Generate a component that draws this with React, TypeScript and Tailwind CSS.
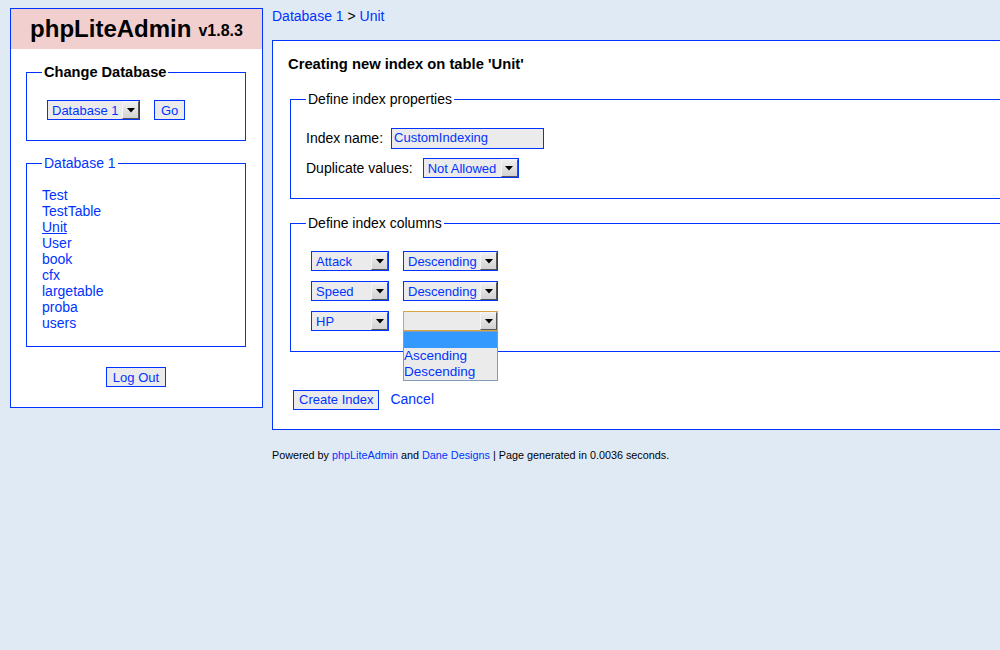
import React from "react";

const font = { fontFamily: '"Liberation Sans", Arial, sans-serif' };

function Arrow() {
  return (
    <span className="flex h-[18px] w-[17px] shrink-0 items-center justify-center border border-t-[#f4f4f4] border-l-[#f4f4f4] border-r-[#555] border-b-[#555] bg-gradient-to-b from-[#f0f0f0] to-[#d2d2d2]">
      <svg width="8" height="5" viewBox="0 0 8 5">
        <path d="M0 0H8L4 4.5Z" fill="#000" />
      </svg>
    </span>
  );
}

function Select({ value, width, focused }: { value: string; width: string; focused?: boolean }) {
  return (
    <div
      className={`inline-flex h-[20px] items-center justify-between overflow-hidden whitespace-nowrap border bg-[#ebebeb] pl-[4px] text-[13px] leading-none text-[#03f] ${width} ${
        focused ? "border-[#d9a441]" : "border-[#03f]"
      }`}
    >
      <span>{value}</span>
      <Arrow />
    </div>
  );
}

function Button({ label, pad = "px-[6px]" }: { label: string; pad?: string }) {
  return (
    <span className={`inline-flex h-[20px] items-center whitespace-nowrap border border-[#03f] bg-[#ebebeb] text-[13px] leading-none text-[#03f] ${pad}`}>
      {label}
    </span>
  );
}

const tables = ["Test", "TestTable", "Unit", "User", "book", "cfx", "largetable", "proba", "users"];

export default function App() {
  return (
    <div className="h-[650px] w-[1000px] overflow-hidden bg-[#e0eaf5]" style={font}>
      <div className="flex items-start">
        {/* sidebar */}
        <div className="ml-[10px] mt-[8px] w-[253px] shrink-0 border border-[#03f] bg-white pb-[20px]">
          <div className="flex h-[40px] items-center justify-center bg-[#f2cfcf] text-black">
            <span className="text-[24px] font-bold">phpLiteAdmin</span>
            <span className="ml-[7px] mt-[4px] text-[16px] font-bold">v1.8.3</span>
          </div>
          <div className="pl-[15px] pr-[16px]">
            <fieldset className="mt-[15px] border border-[#03f] px-[15px] pb-[20px] pt-[20px]">
              <legend className="px-[2px] text-[14.6px] font-bold leading-[16px] text-black">Change Database</legend>
              <div className="ml-[5px] flex items-center gap-[14px]">
                <Select value="Database 1" width="w-[93px]" />
                <Button label="Go" />
              </div>
            </fieldset>
            <fieldset className="mt-[14px] border border-[#03f] px-[15px] pb-[15px] pt-[16px]">
              <legend className="px-[2px] text-[14px] leading-[16px] text-[#03f]">Database 1</legend>
              <div className="flex flex-col text-[14px] leading-[16px] text-[#03f]">
                {tables.map((t) => (
                  <span key={t} className={t === "Unit" ? "underline" : ""}>
                    {t}
                  </span>
                ))}
              </div>
            </fieldset>
            <div className="mt-[20px] flex justify-center">
              <Button label="Log Out" />
            </div>
          </div>
        </div>

        {/* main */}
        <div className="ml-[9px] w-[800px] shrink-0">
          <div className="mt-[8px] h-[16px] text-[14px] leading-[16px] text-black">
            <span className="text-[#03f]">Database 1</span> &gt; <span className="text-[#03f]">Unit</span>
          </div>
          <div className="mt-[16px] border border-[#03f] bg-white pb-[19px] pl-[17px]">
            <div className="ml-[-2px] mt-[15px] text-[14.75px] font-bold leading-[16px] text-black">
              Creating new index on table 'Unit'
            </div>
            <fieldset className="mt-[19px] border border-[#03f] px-[15px] pb-[20px] pt-[21px] text-[14px] text-black">
              <legend className="px-[2px] leading-[16px]">Define index properties</legend>
              <div className="flex h-[20px] items-center">
                <span>Index name:</span>
                <span className="ml-[8px] flex h-[21px] w-[153px] items-center border border-[#03f] bg-[#ebebeb] pl-[2px] text-[13px] text-[#03f]">
                  CustomIndexing
                </span>
              </div>
              <div className="mt-[10px] flex h-[20px] items-center">
                <span>Duplicate values:</span>
                <span className="ml-[10px] flex">
                  <Select value="Not Allowed" width="w-[96px]" />
                </span>
              </div>
            </fieldset>
            <fieldset className="mt-[16px] border border-[#03f] px-[20px] pb-[20px] pt-[20px] text-[14px] text-black">
              <legend className="ml-[-5px] px-[2px] leading-[16px]">Define index columns</legend>
              <div className="flex flex-col gap-[10px]">
                <div className="flex gap-[14px]">
                  <Select value="Attack" width="w-[78px]" />
                  <Select value="Descending" width="w-[95px]" />
                </div>
                <div className="flex gap-[14px]">
                  <Select value="Speed" width="w-[78px]" />
                  <Select value="Descending" width="w-[95px]" />
                </div>
                <div className="flex gap-[14px]">
                  <Select value="HP" width="w-[78px]" />
                  <div className="relative flex">
                    <Select value="" width="w-[95px]" focused />
                    <div className="absolute left-0 top-[20px] z-10 w-[95px] border border-[#7f9db9] bg-[#ebebeb] text-[13.5px] leading-[16px] text-[#03f]">
                      <div className="h-[16px] bg-[#3399ff]" />
                      <div>Ascending</div>
                      <div>Descending</div>
                    </div>
                  </div>
                </div>
              </div>
            </fieldset>
            <div className="ml-[3px] mt-[37px] flex items-center gap-[11px]">
              <Button label="Create Index" pad="px-[5px]" />
              <span className="text-[14px] text-[#03f]">Cancel</span>
            </div>
          </div>
          <div className="mt-[19px] text-[10.8px] leading-[13px] text-black">
            Powered by <span className="text-[#03f]">phpLiteAdmin</span> and{" "}
            <span className="text-[#03f]">Dane Designs</span> | Page generated in 0.0036 seconds.
          </div>
        </div>
      </div>
    </div>
  );
}
